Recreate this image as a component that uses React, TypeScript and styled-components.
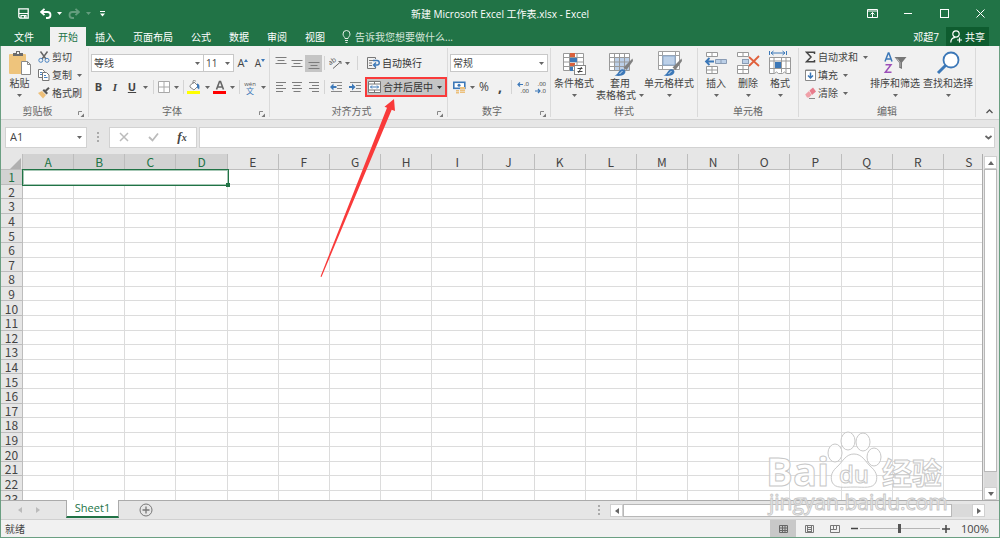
import React from 'react';
import styled, { createGlobalStyle } from 'styled-components';

const GREEN = '#217346';
const UI = '"Open Sans", "Noto Sans CJK SC", sans-serif';
const CELL = '"Noto Sans CJK SC", "Noto Sans", sans-serif';

const Global = createGlobalStyle`
  * { box-sizing: border-box; }
  body { margin: 0; font-family: ${UI}; font-size: 10px; color: #444; overflow: hidden; }
  button, input, select { font: inherit; color: inherit; margin: 0; padding: 0; border: 0; background: none; border-radius: 0; outline: 0; }
  svg { display: block; flex: none; }
`;

const Window = styled.div`
  position: relative;
  display: flex;
  flex-direction: column;
  height: 100vh;
  min-height: 320px;
  background: #e6e6e6;
  border: solid #6b9f82;
  border-width: 0 1px 1px;
  line-height: 14px;
  white-space: nowrap;
`;

/* ---------- title bar and tabs ---------- */
const TitleBar = styled.header`
  display: grid;
  grid-template-columns: 1fr auto 1fr;
  align-items: center;
  height: 27px;
  margin: 0 -1px;
  background: ${GREEN};
  color: #fff;
`;
const Title = styled.h1`
  margin: 0;
  font-size: 10px;
  font-weight: 400;
`;
const QuickBar = styled.div`
  display: flex;
  align-items: center;
  padding-left: 11px;
`;
const WindowBar = styled.div`
  display: flex;
  justify-content: flex-end;
  align-items: center;
  padding-right: 2px;
`;
const BarButton = styled.button<{ $w: number; $dim?: boolean }>`
  display: flex;
  align-items: center;
  justify-content: center;
  width: ${p => p.$w}px;
  height: 20px;
  color: #fff;
  opacity: ${p => (p.$dim ? 0.3 : 1)};
`;
const TabBar = styled.nav`
  display: flex;
  height: 19px;
  margin: 0 -1px;
  background: ${GREEN};
  color: #fff;
`;
const Tab = styled.button<{ $active?: boolean; $file?: boolean }>`
  padding: ${p => (p.$file ? '0 16px 0 14px' : p.$active ? '0 8px' : '0 9px')};
  color: ${p => (p.$active ? GREEN : '#fff')};
  background: ${p => (p.$active ? '#f1f1f1' : 'transparent')};
`;
const TellMe = styled.label`
  display: flex;
  flex: 1;
  align-items: center;
  gap: 4px;
  padding-left: 8px;
  color: #d5e6db;
  input { flex: 1; min-width: 0; }
  input::placeholder { color: #d5e6db; opacity: 1; }
`;
const Account = styled.button`
  padding: 0 7px;
  color: #fff;
`;
const Share = styled.button`
  display: flex;
  align-items: center;
  gap: 2px;
  width: 43px;
  margin-right: 11px;
  padding-left: 4px;
  background: #0e5c2f;
  color: #fff;
`;

/* ---------- ribbon ---------- */
const Ribbon = styled.section`
  display: flex;
  height: 74px;
  padding-top: 2px;
  background: #f1f1f1;
  border-bottom: 1px solid #d2d2d2;
`;
const GroupBox = styled.div<{ $w: number }>`
  display: flex;
  flex-direction: column;
  width: ${p => p.$w}px;
  flex: none;
  margin-bottom: 2px;
  border-right: 1px solid #dadada;
`;
const GroupBody = styled.div`
  display: flex;
  flex: none;
  height: 56px;
`;
const GroupFoot = styled.div`
  display: flex;
  flex: none;
  align-items: center;
  height: 14px;
  color: #666;
  span { flex: 1; text-align: center; }
`;
const Launcher = styled.button`
  width: 14px;
  height: 14px;
  padding: 5px 0 0 4px;
`;
const Rows = styled.div`
  display: flex;
  flex-direction: column;
  flex: 1;
  gap: 2px;
  padding: 4px 0 0 2px;
`;
const Row = styled.div`
  display: flex;
  align-items: center;
  height: 22px;
`;
const Stack = styled.div<{ $pad?: number }>`
  display: flex;
  flex: 1;
  flex-direction: column;
  padding-left: ${p => p.$pad || 0}px;
`;
const SmallButton = styled.button`
  display: flex;
  align-items: center;
  gap: 2px;
  height: 18px;
  svg + span + svg { margin-left: 3px; }
`;
const BigButton = styled.button<{ $w: number }>`
  display: flex;
  flex-direction: column;
  align-items: center;
  flex: none;
  width: ${p => p.$w}px;
  padding-top: 2px;
  line-height: 12px;
  & > svg:first-child { height: 26px; margin-bottom: 1px; }
`;
const BigCaret = styled.span`
  display: flex;
  align-items: center;
  gap: 3px;
  height: 12px;
`;
const Tool = styled.button<{ $w: number; $on?: boolean }>`
  display: flex;
  align-items: center;
  justify-content: center;
  flex: none;
  width: ${p => p.$w}px;
  height: 17px;
  background: ${p => (p.$on ? '#c5c5c5' : 'transparent')};
`;
const Glyph = styled.span<{ $bold?: boolean; $italic?: boolean; $line?: boolean; $serif?: boolean; $size?: number }>`
  font-family: ${p => (p.$serif ? '"Liberation Serif", serif' : UI)};
  font-size: ${p => p.$size || 11}px;
  font-weight: ${p => (p.$bold ? 700 : 400)};
  font-style: ${p => (p.$italic ? 'italic' : 'normal')};
  text-decoration: ${p => (p.$line ? 'underline' : 'none')};
`;
const Split = styled.i<{ $m?: number }>`
  width: 1px;
  height: 14px;
  margin: 0 ${p => p.$m ?? 2}px;
  background: #d4d4d4;
`;
const Combo = styled.label<{ $w: number }>`
  position: relative;
  flex: none;
  width: ${p => p.$w}px;
  height: 18px;
  margin-right: -1px;
  background: #fff;
  border: 1px solid #c8c8c8;
  select { appearance: none; width: 100%; height: 16px; padding-left: 2px; }
  svg { position: absolute; right: 3px; top: 7px; pointer-events: none; }
`;
const TextButton = styled.button<{ $marked?: boolean }>`
  display: flex;
  align-items: center;
  gap: 2px;
  flex: none;
  height: 20px;
  width: 82px;
  padding: 0 ${p => (p.$marked ? 3 : 1)}px 0 1px;
  border: 2px solid ${p => (p.$marked ? '#f93a3a' : 'transparent')};
  background: ${p => (p.$marked ? '#c5c5c5' : 'transparent')};
  color: #333;
  span { flex: 1; text-align: left; }
`;
const Collapse = styled.button`
  display: flex;
  flex: 1;
  align-items: flex-end;
  justify-content: center;
  padding: 0 0 5px 4px;
`;

/* ---------- formula bar ---------- */
const FormulaBar = styled.div`
  display: flex;
  align-items: center;
  height: 34px;
  padding: 0 4px;
`;
const NameBox = styled.label`
  display: flex;
  align-items: center;
  width: 82px;
  height: 21px;
  padding: 0 4px;
  background: #fff;
  border: 1px solid #d2d2d2;
  input { flex: 1; min-width: 0; font-size: 11px; }
`;
const Grip = styled.div`
  display: flex;
  align-items: center;
  justify-content: center;
  width: 22px;
`;
const EntryButtons = styled.div`
  display: flex;
  align-items: center;
  justify-content: space-around;
  width: 88px;
  height: 21px;
  margin-right: 2px;
  background: #fff;
  border: 1px solid #d2d2d2;
`;
const FormulaInput = styled.label`
  display: flex;
  align-items: center;
  flex: 1;
  height: 21px;
  padding: 0 2px;
  background: #fff;
  border: 1px solid #d2d2d2;
  input { flex: 1; }
`;

/* ---------- sheet ---------- */
const SheetArea = styled.main`
  display: flex;
  flex: 1;
  min-height: 0;
`;
const GridPane = styled.div`
  flex: 1;
  min-width: 0;
  overflow: hidden;
  border-right: 1px solid #ababab;
`;
const Grid = styled.table`
  table-layout: fixed;
  width: calc(100% + 13px);
  height: calc(100% + 6px);
  border-spacing: 0;
  font-family: ${CELL};
  font-size: 12px;
  line-height: 13px;
  td, th { padding: 0; font-weight: 400; text-align: center; }
  td { background: #fff; border: solid #dcdcdc; border-width: 0 1px 1px 0; }
  thead tr { height: 16px; }
`;
const HeadCell = styled.th<{ $on?: boolean }>`
  background: ${p => (p.$on ? '#d2d2d2' : '#e6e6e6')};
  color: ${p => (p.$on ? GREEN : '#444')};
  border: solid #bdbdbd;
  border-width: 0 1px 1px 0;
`;
const Corner = styled.th`
  width: 22px;
  border: solid #bdbdbd;
  border-width: 0 1px 1px 0;
  svg { margin: 3px 0 0 9px; }
`;
const Picked = styled.td`
  position: relative;
  && { border: 0; box-shadow: 0 0 0 1px ${GREEN}, inset 0 0 0 1px ${GREEN}66; }
  &::after {
    content: '';
    position: absolute;
    right: -2px;
    bottom: -2px;
    width: 4px;
    height: 4px;
    background: ${GREEN};
  }
`;
const VScroll = styled.div`
  display: flex;
  flex-direction: column;
  width: 13px;
  margin: 2px 2px 0 1px;
  background: #dadada;
`;
const ScrollButton = styled.button`
  display: flex;
  align-items: center;
  justify-content: center;
  width: 13px;
  height: 13px;
  flex: none;
  background: #fff;
  border: 1px solid #d0d0d0;
`;
const Thumb = styled.div<{ $grow: number }>`
  flex: ${p => p.$grow} 1 0;
  background: #fff;
  border: 1px solid #b8b8b8;
`;
const Space = styled.div<{ $grow: number }>`
  flex: ${p => p.$grow} 1 0;
`;

/* ---------- bottom bars ---------- */
const SheetBar = styled.div`
  display: flex;
  height: 19px;
  border-top: 1px solid #ababab;
`;
const SheetNav = styled.div`
  display: flex;
  align-items: center;
  width: 65px;
  padding-left: 10px;
  button { display: flex; justify-content: center; width: 18px; }
`;
const SheetTab = styled.button`
  width: 53px;
  height: 18px;
  margin-top: -1px;
  background: #fff;
  border: solid #ababab;
  border-width: 0 1px;
  border-bottom: 2px solid ${GREEN};
  color: ${GREEN};
  font-size: 11px;
  line-height: 14px;
`;
const AddSheet = styled.button`
  display: flex;
  align-items: center;
  width: 40px;
  padding-left: 20px;
`;
const HScroll = styled.div`
  display: flex;
  width: 375px;
  height: 13px;
  margin: 3px 14px 0 0;
  background: #dadada;
`;
const Fill = styled.div`
  flex: 1;
`;
const StatusBar = styled.footer`
  display: flex;
  align-items: center;
  height: 18px;
  padding-left: 4px;
  background: #f1f1f1;
  border-top: 1px solid #d0d0d0;
`;
const ViewButton = styled.button<{ $on?: boolean }>`
  display: flex;
  align-items: center;
  justify-content: center;
  width: 26px;
  height: 17px;
  background: ${p => (p.$on ? '#c8c8c8' : 'transparent')};
`;
const ZoomButton = styled.button`
  display: flex;
  justify-content: center;
  width: 12px;
`;
const ZoomRange = styled.input`
  appearance: none;
  width: 80px;
  height: 10px;
  background: linear-gradient(#b5b5b5, #b5b5b5) center / 100% 1px no-repeat;
  &::-webkit-slider-thumb { appearance: none; width: 3px; height: 9px; background: #555; }
`;
const ZoomValue = styled.span`
  width: 47px;
  padding-left: 9px;
  font-size: 11px;
`;

/* ---------- overlays ---------- */
const Pointer = styled.svg`
  position: absolute;
  left: 318px;
  top: 98px;
  pointer-events: none;
`;
const Watermark = styled.svg`
  position: absolute;
  right: 50px;
  bottom: 18px;
  pointer-events: none;
`;

/* ---------- icons ---------- */
const Caret = ({ c = '#666' }: { c?: string }) => (
  <svg width="5" height="3" viewBox="0 0 5 3"><path d="M0 0h5L2.5 3z" fill={c} /></svg>
);
const Arrow = ({ dir, c = '#666' }: { dir: 'left' | 'right' | 'up' | 'down'; c?: string }) => {
  const d = { left: 'M5 0v6L1 3z', right: 'M1 0v6l4-3z', up: 'M0 5h6L3 1z', down: 'M0 1h6L3 5z' }[dir];
  return <svg width="6" height="6" viewBox="0 0 6 6"><path d={d} fill={c} /></svg>;
};
const Dots = () => (
  <svg width="2" height="10" viewBox="0 0 2 10"><path d="M0 0h2v2H0zM0 4h2v2H0zM0 8h2v2H0z" fill="#aaa" /></svg>
);
const Lines = ({ widths, align, y = 1, step = 3 }: { widths: number[]; align: 'l' | 'c' | 'r'; y?: number; step?: number }) => (
  <svg width="12" height="12" viewBox="0 0 12 12">
    {widths.map((w, i) => (
      <rect key={i} x={align === 'l' ? 1 : align === 'r' ? 11 - w : 6 - w / 2} y={y + i * step} width={w} height="1" fill="#7c7c7c" />
    ))}
  </svg>
);
const Indent = ({ out }: { out?: boolean }) => (
  <svg width="12" height="12" viewBox="0 0 12 12">
    <path d="M1 1.5h11M7 4.5h5M7 7.5h5M1 10.5h11" stroke="#888" />
    <path d={out ? 'M0 6l3.500-3.500v2.500h3v2h-3v2.500z' : 'M6.500 6L3 2.500V5H0v2h3v2.500z'} fill="#3c78b8" />
  </svg>
);
const PasteIcon = () => (
  <svg width="24" height="26" viewBox="0 0 24 26">
    <rect x="1" y="4" width="17" height="20" rx="1" fill="#eec47c" />
    <path d="M5 6V3h3V1h4v2h3v3z" fill="#6a6a6a" /><rect x="9" y="2" width="2" height="2" fill="#f1f1f1" />
    <path d="M13.5 11.5h6l3 3v10h-9z" fill="#fff" stroke="#8a8a8a" /><path d="M19.5 11.5v3h3" fill="none" stroke="#8a8a8a" />
  </svg>
);
const CutIcon = () => (
  <svg width="12" height="12" viewBox="0 0 12 12" fill="none">
    <path d="M2.5 .5L8 8M9.5 .5L4 8" stroke="#666" strokeWidth="1.5" />
    <circle cx="2.8" cy="9.3" r="2" stroke="#4a83c0" /><circle cx="9" cy="9.3" r="2" stroke="#4a83c0" />
  </svg>
);
const CopyIcon = () => (
  <svg width="12" height="12" viewBox="0 0 12 12" stroke="#777" fill="#fff">
    <path d="M.5.5h4l2 2v6h-6z" /><path d="M4.5 3.5h4l2.5 2.5v5.5H4.5z" />
    <path d="M2 3.5h2M2 5.500h2M6 6.5h2M6 8.5h3.5" stroke="#4a83c0" />
  </svg>
);
const BrushIcon = () => (
  <svg width="12" height="12" viewBox="0 0 12 12">
    <path d="M0 6l4-2 4 4-3 3.5z" fill="#eec07a" /><path d="M4.5 3.5L6 2l4 4-1.5 1.5z" fill="#555" />
    <path d="M7.5 4L11 .8" stroke="#555" strokeWidth="2" />
  </svg>
);
const BordersIcon = () => (
  <svg width="12" height="12" viewBox="0 0 12 12" fill="#fff" stroke="#a8a8a8"><path d="M.5.5h11v11H.5zM6 .5v11M.5 6h11" /></svg>
);
const FillIcon = () => (
  <svg width="14" height="14" viewBox="0 0 14 14">
    <path d="M3 5.5L7 2l4 4-4 4-4-3z" fill="#fff" stroke="#888" /><path d="M6 4V1.5a1.2 1.2 0 0 1 2.5 0" fill="none" stroke="#888" />
    <path d="M10 3.500c2.500.5 3 3 2 6l-2-2z" fill="#3c78b8" /><rect x="0" y="11" width="13" height="3" fill="#ff0" />
  </svg>
);
const FontColorIcon = () => (
  <svg width="14" height="14" viewBox="0 0 14 14">
    <path d="M3.5 9.5L6.5 1.5h1L10.500 9.5M4.800 7h4.500" fill="none" stroke="#666" strokeWidth="1.6" />
    <rect x="0" y="11" width="13" height="3" fill="#f00" />
  </svg>
);
const PhoneticIcon = () => (
  <svg width="14" height="15" viewBox="0 0 14 15">
    <text x="7" y="6" fontSize="6" textAnchor="middle" fill="#555">wén</text>
    <text x="7" y="14" fontSize="8" textAnchor="middle" fill="#3c78b8">文</text>
  </svg>
);
const OrientIcon = () => (
  <svg width="13" height="12" viewBox="0 0 13 12" fill="none" stroke="#666">
    <text x="0" y="7" fontSize="7" fill="#555" stroke="none" transform="rotate(-35 3 6)">ab</text>
    <path d="M4 11.5L12 4.5M12 4.5H9.5M12 4.5V7" />
  </svg>
);
const WrapIcon = () => (
  <svg width="13" height="12" viewBox="0 0 13 12" fill="none">
    <path d="M8.500 2V.5h-8v11h8V10M2 3.5h5M2 6h3M2 8.5h3" stroke="#777" />
    <path d="M6 3.500h4a2.200 2.200 0 0 1 0 4.500H7M9 5.500L6.500 8 9 10.500" stroke="#3c78b8" strokeWidth="1.400" />
  </svg>
);
const MergeIcon = () => (
  <svg width="13" height="12" viewBox="0 0 13 12" fill="#fff" stroke="#777">
    <path d="M.5.5h12v11H.5zM.5 3h12M.5 9h12M6.5.5V3M6.5 9v2.5" />
    <path d="M2.5 6h8M4 4.5L2.5 6 4 7.5M9 4.5L10.5 6 9 7.5" fill="none" stroke="#3c78b8" />
  </svg>
);
const CurrencyIcon = () => (
  <svg width="13" height="13" viewBox="0 0 13 13">
    <rect x=".8" y="1.3" width="11" height="6" fill="#fff" stroke="#3c78b8" strokeWidth="1.6" /><circle cx="6" cy="4.3" r="1.5" fill="#3c78b8" />
    <path d="M7 6h5v2H7zM7 8.5h5v1.5H7zM7 10.500h5V12H7zM3 9h3v1.5H3zM3 11h3v1.5H3z" fill="#ecc07c" />
  </svg>
);
const DecimalIcon = ({ less }: { less?: boolean }) => (
  <svg width="13" height="13" viewBox="0 0 13 13">
    <text x={less ? 12 : 7} y="5" textAnchor={less ? 'end' : 'start'} fontSize="6" fill="#333">{less ? '.00' : '.0'}</text>
    <text x="12" y="12" textAnchor="end" fontSize="6" fill="#333">{less ? '.0' : '.00'}</text>
    <path d={less ? 'M1 10h4.5M4 8l2 2-2 2' : 'M6 3.5H1.5M3 1.5l-2 2 2 2'} fill="none" stroke="#3c78b8" strokeWidth="1.2" />
  </svg>
);
const Pen = () => (
  <g transform="translate(0 2)">
    <path d="M24.500 5.500l.5 2.500-6.500 9-3-2.500z" fill="#808080" />
    <path d="M6.500 22.500c4-.5 3.500-5.500 7.500-6.200 3.500-.3 4.500 3 2.200 5-2 1.700-6 2-9.700 1.200z" fill="#3c78b8" /><path d="M11.500 21l3-3" stroke="#dce8f4" />
  </g>
);
const CondIcon = () => (
  <svg width="25" height="26" viewBox="0 0 25 26">
    <path d="M1.5 3.5h20v17h-20zM1.5 7.5h20M1.5 12h20M1.5 16.5h20M7.5 3.5v17M15 3.5v17" fill="#fff" stroke="#999" />
    <path d="M8 3h5v4H8z" fill="#d9603c" /><path d="M8 8h7v4H8z" fill="#3c78b8" /><path d="M8 13h5v3H8z" fill="#d9603c" /><path d="M8 17h3v4H8z" fill="#3c78b8" />
    <rect x="12.5" y="15.5" width="11" height="9" fill="#fff" stroke="#888" /><path d="M15.500 18.5h5M15.500 21.5h5M19.500 17l-3 6" stroke="#444" />
  </svg>
);
const TableStyleIcon = () => (
  <svg width="25" height="26" viewBox="0 0 25 26">
    <g transform="translate(0 1)">
      <path d="M1.5 2.5h20v17h-20z" fill="#fff" /><path d="M7 7h14v12H7z" fill="#bcd0e8" />
      <path d="M1.5 2.5h20v17h-20zM1.5 6.5h20M1.5 11h20M1.5 15.5h20M6.5 2.5v17M11.5 2.5v17M16.5 2.5v17" fill="none" stroke="#999" />
      <Pen />
    </g>
  </svg>
);
const CellStyleIcon = () => (
  <svg width="25" height="26" viewBox="0 0 25 26">
    <g transform="translate(0 1)">
      <path d="M1.5.5h21v18h-21zM1.5 4.500h21M1.5 14.5h21M5.5 .5v18M18.500 .5v18" fill="#fff" stroke="#a0a0a0" />
      <rect x="6" y="5" width="12" height="9" fill="#bcd0e8" stroke="#8aaad0" />
      <Pen />
    </g>
  </svg>
);
const InsertIcon = () => (
  <svg width="24" height="24" viewBox="0 0 24 24">
    <path d="M2.5 1.5h11v4h-11zM8 1.5v4M2.5 15.5h11v7h-11zM8 15.5v7M2.5 19h11" fill="#fff" stroke="#999" />
    <path d="M11.5 8.5h11v4h-11zM17 8.5v4" fill="#bcd0e8" stroke="#8a9cb4" />
    <path d="M10 10.5H2M5.5 7L2 10.5 5.5 14" fill="none" stroke="#3c78b8" strokeWidth="1.8" />
  </svg>
);
const DeleteIcon = () => (
  <svg width="24" height="24" viewBox="0 0 24 24">
    <path d="M1.5 1.5h11v4h-11zM7 1.5v4M1.5 14.5h11v8h-11zM7 14.5v8M1.5 18.5h11" fill="#fff" stroke="#999" />
    <rect x="6.5" y="8.5" width="6" height="4" fill="#bcd0e8" stroke="#8a9cb4" />
    <path d="M13 6l10 9M23 5L13 15" stroke="#e0603c" strokeWidth="1.8" />
  </svg>
);
const FormatIcon = () => (
  <svg width="24" height="24" viewBox="0 0 24 24">
    <path d="M1.5 0v4M18.5 0v4M3 2h14M5.5 0L3 2l2.5 2M14.5 0L17 2l-2.5 2" fill="none" stroke="#3c78b8" />
    <path d="M1.5 6.5h21v16h-4l-2-1.5-2 1.5h-4l-2-1.5-2 1.5h-5zM6 6.500v16M13.5 6.5v15M18 6.5v16M1.5 10h21M1.5 17.5h21" fill="#fff" stroke="#999" />
    <rect x="7" y="11" width="6" height="6" fill="#3c78b8" />
  </svg>
);
const SumIcon = () => (
  <svg width="11" height="12" viewBox="0 0 11 12"><path d="M9.5 3V1.2H1.5L6 6l-4.500 4.8h8V9" fill="none" stroke="#444" strokeWidth="1.5" /></svg>
);
const FillDownIcon = () => (
  <svg width="11" height="12" viewBox="0 0 11 12" fill="none"><path d="M.5 1h10v10.5H.5z" fill="#fff" stroke="#888" /><path d="M.5 1.5h10" stroke="#888" /><path d="M5.5 3.5V9M3 6.5L5.5 9 8 6.5" stroke="#3c78b8" strokeWidth="1.5" /></svg>
);
const EraseIcon = () => (
  <svg width="11" height="12" viewBox="0 0 11 12"><path d="M4.500 3.500L8 .5l3 4-4 3.500z" fill="#e87c8c" /><path d="M4 4L6.500 8 4 10.500H2L.2 7.500z" fill="#f0a0a8" /><path d="M4 11.500h6" stroke="#888" /></svg>
);
const SortIcon = () => (
  <svg width="24" height="24" viewBox="0 0 24 24" fill="none">
    <path d="M2 10.5L5.3 2h.6L9 10.5M3 8h5" stroke="#3c78b8" strokeWidth="1.5" />
    <path d="M2.5 13.7h5.500L2.3 21.3h6.2" stroke="#9c50b8" strokeWidth="1.5" />
    <path d="M11.5 6h12l-4.500 5.5V18l-3-1.5v-5z" fill="#777" /><path d="M14 7.5l3 4V16" stroke="#ccc" strokeWidth=".8" />
  </svg>
);
const FindIcon = () => (
  <svg width="24" height="24" viewBox="0 0 24 24"><path d="M10 14l-8 8" stroke="#3c78b8" strokeWidth="3" /><circle cx="15" cy="9" r="7.5" fill="#fff" stroke="#3c78b8" strokeWidth="1.8" /></svg>
);
const SaveIcon = () => (
  <svg width="11" height="11" viewBox="0 0 11 11" fill="none" stroke="#fff"><path d="M.8.8h9.400v9.400H2L.8 9z" strokeWidth="1.300" /><path d="M1 5.5h9M3 10V7.500h5V10M6.500 8v2" strokeWidth="1.200" /></svg>
);
const UndoIcon = ({ flip }: { flip?: boolean }) => (
  <svg width="12" height="11" viewBox="0 0 12 11"><path d={flip ? 'M11 4H4.500a3 3 0 0 0 0 6H6M7.500.8L11 4 7.500 7.200' : 'M1 4h6.500a3 3 0 0 1 0 6H6M4.500.8L1 4l3.500 3.200'} fill="none" stroke="#fff" strokeWidth="1.8" /></svg>
);

/* ---------- parts ---------- */
const Group = ({ w, name, launcher, children }: { w: number; name: string; launcher?: boolean; children: React.ReactNode }) => (
  <GroupBox $w={w}>
    <GroupBody>{children}</GroupBody>
    <GroupFoot>
      <span>{name}</span>
      {launcher && (
        <Launcher aria-label={name}>
          <svg width="6" height="6" viewBox="0 0 6 6"><path d="M.5 4V.5H4" fill="none" stroke="#888" /><path d="M6 2.5V6H2.5z" fill="#777" /></svg>
        </Launcher>
      )}
    </GroupFoot>
  </GroupBox>
);
const Big = ({ w, icon, label, second }: { w: number; icon: React.ReactNode; label: string; second?: string }) => (
  <BigButton $w={w}>
    {icon}
    <span>{label}</span>
    <BigCaret>{second}<Caret /></BigCaret>
  </BigButton>
);
const More = ({ w = 10 }: { w?: number }) => <Tool $w={w} aria-label="更多"><Caret /></Tool>;
const Select = ({ w, label, value }: { w: number; label: string; value: string }) => (
  <Combo $w={w}>
    <select aria-label={label}><option>{value}</option></select>
    <Caret />
  </Combo>
);

const columns = 'ABCDEFGHIJKLMNOPQRS'.split('');
const rowNumbers = Array.from({ length: 23 }, (_, i) => i + 1);

export default function App() {
  return (
    <Window>
      <Global />
      <TitleBar>
        <QuickBar>
          <BarButton $w={24} aria-label="保存"><SaveIcon /></BarButton>
          <BarButton $w={22} aria-label="撤消"><UndoIcon /></BarButton>
          <BarButton $w={5} aria-label="撤消列表"><Caret c="#fff" /></BarButton>
          <BarButton $w={24} $dim aria-label="恢复"><UndoIcon flip /></BarButton>
          <BarButton $w={5} $dim aria-label="恢复列表"><Caret c="#fff" /></BarButton>
          <BarButton $w={22} aria-label="自定义">
            <svg width="5" height="6" viewBox="0 0 5 6"><path d="M0 0h5v1H0zM0 2.5h5L2.5 5.5z" fill="#fff" /></svg>
          </BarButton>
        </QuickBar>
        <Title>新建 Microsoft Excel 工作表.xlsx - Excel</Title>
        <WindowBar>
          <BarButton $w={36} aria-label="功能区显示选项">
            <svg width="11" height="9" viewBox="0 0 11 9" fill="none" stroke="#fff"><path d="M.5.5h10v8H.5zM.5 2h10M5.5 8V3.5M3.5 5.5l2-2 2 2" /></svg>
          </BarButton>
          <BarButton $w={36} aria-label="最小化"><svg width="8" height="1"><rect width="8" height="1" fill="#fff" /></svg></BarButton>
          <BarButton $w={36} aria-label="最大化"><svg width="9" height="9"><rect x=".5" y=".5" width="8" height="8" fill="none" stroke="#fff" /></svg></BarButton>
          <BarButton $w={36} aria-label="关闭"><svg width="9" height="9"><path d="M.5.5l8 8M8.5.5l-8 8" stroke="#fff" /></svg></BarButton>
        </WindowBar>
      </TitleBar>
      <TabBar>
        <Tab $file>文件</Tab>
        <Tab $active>开始</Tab>
        {['插入', '页面布局', '公式', '数据', '审阅', '视图'].map(t => <Tab key={t}>{t}</Tab>)}
        <TellMe>
          <svg width="9" height="13" viewBox="0 0 9 13" fill="none" stroke="#e4efe8"><path d="M3 8.5C3 7 1 6.500 1 4a3.5 3.5 0 0 1 7 0c0 2.5-2 3-2 4.500zM3 10.5h3M3.5 12.5h2" /></svg>
          <input aria-label="告诉我" placeholder="告诉我您想要做什么..." />
        </TellMe>
        <Account>邓超7</Account>
        <Share>
          <svg width="13" height="13" viewBox="0 0 13 13" fill="none" stroke="#fff" strokeWidth="1.2"><circle cx="6" cy="4" r="3.2" /><path d="M.8 12.5c0-3 2-5 4.500-5.200M9.5 7.5v5M7 10h5" /></svg>
          共享
        </Share>
      </TabBar>

      <Ribbon>
        <Group w={88} name="剪贴板" launcher>
          <Big w={37} icon={<PasteIcon />} label="粘贴" />
          <Stack>
            <SmallButton><CutIcon /><span>剪切</span></SmallButton>
            <SmallButton><CopyIcon /><span>复制</span><Caret /></SmallButton>
            <SmallButton><BrushIcon /><span>格式刷</span></SmallButton>
          </Stack>
        </Group>
        <Group w={181} name="字体" launcher>
          <Rows>
            <Row>
              <Select w={113} label="字体" value="等线" />
              <Select w={31} label="字号" value="11" />
              <Tool $w={20} aria-label="增大字号"><Glyph>A</Glyph><svg width="4" height="9"><path d="M0 3l2-3 2 3z" fill="#3c78b8" /></svg></Tool>
              <Tool $w={14} aria-label="减小字号"><Glyph $size={10}>A</Glyph><svg width="4" height="9"><path d="M0 0h4L2 3z" fill="#3c78b8" /></svg></Tool>
            </Row>
            <Row>
              <Tool $w={15}><Glyph $bold>B</Glyph></Tool>
              <Tool $w={18}><Glyph $bold $italic $serif>I</Glyph></Tool>
              <Tool $w={16}><Glyph $bold $line>U</Glyph></Tool>
              <More /><Split $m={3} />
              <Tool $w={14} aria-label="边框"><BordersIcon /></Tool><More /><Split />
              <Tool $w={16} aria-label="填充颜色"><FillIcon /></Tool><More />
              <Tool $w={15} aria-label="字体颜色"><FontColorIcon /></Tool><More /><Split />
              <Tool $w={16} aria-label="拼音"><PhoneticIcon /></Tool><More />
            </Row>
          </Rows>
        </Group>
        <Group w={178} name="对齐方式" launcher>
          <Rows>
            <Row>
              <Tool $w={17} aria-label="顶端对齐"><Lines widths={[11, 7, 11]} align="c" y={0} /></Tool>
              <Tool $w={16} aria-label="垂直居中"><Lines widths={[11, 7, 11]} align="c" y={3} /></Tool>
              <Tool $w={17} $on aria-label="底端对齐"><Lines widths={[11, 7, 11]} align="c" y={5} /></Tool>
              <Split />
              <Tool $w={16} aria-label="方向"><OrientIcon /></Tool><More w={8} />
              <Split $m={6} />
              <TextButton><WrapIcon /><span>自动换行</span></TextButton>
            </Row>
            <Row>
              <Tool $w={17} aria-label="左对齐"><Lines widths={[10, 7, 10, 7]} align="l" /></Tool>
              <Tool $w={16} aria-label="居中"><Lines widths={[10, 7, 10, 7]} align="c" /></Tool>
              <Tool $w={17} aria-label="右对齐"><Lines widths={[10, 7, 10, 7]} align="r" /></Tool>
              <Split />
              <Tool $w={18} aria-label="减少缩进量"><Indent out /></Tool>
              <Tool $w={20} aria-label="增加缩进量"><Indent /></Tool>
              <TextButton $marked><MergeIcon /><span>合并后居中</span><Caret c="#333" /></TextButton>
            </Row>
          </Rows>
        </Group>
        <Group w={103} name="数字" launcher>
          <Rows>
            <Row><Select w={98} label="数字格式" value="常规" /></Row>
            <Row>
              <Tool $w={18} aria-label="会计格式"><CurrencyIcon /></Tool><More w={8} />
              <Tool $w={16}><Glyph $size={12}>%</Glyph></Tool>
              <Tool $w={16}><Glyph $bold $size={14}>,</Glyph></Tool>
              <Split $m={3} />
              <Tool $w={16} aria-label="增加小数位数"><DecimalIcon /></Tool>
              <Tool $w={18} aria-label="减少小数位数"><DecimalIcon less /></Tool>
            </Row>
          </Rows>
        </Group>
        <Group w={147} name="样式">
          <Big w={46} icon={<CondIcon />} label="条件格式" />
          <Big w={46} icon={<TableStyleIcon />} label="套用" second="表格格式" />
          <Big w={52} icon={<CellStyleIcon />} label="单元格样式" />
        </Group>
        <Group w={101} name="单元格">
          <Big w={36} icon={<InsertIcon />} label="插入" />
          <Big w={28} icon={<DeleteIcon />} label="删除" />
          <Big w={36} icon={<FormatIcon />} label="格式" />
        </Group>
        <Group w={177} name="编辑">
          <Stack $pad={6}>
            <SmallButton><SumIcon /><span>自动求和</span><Caret /></SmallButton>
            <SmallButton><FillDownIcon /><span>填充</span><Caret /></SmallButton>
            <SmallButton><EraseIcon /><span>清除</span><Caret /></SmallButton>
          </Stack>
          <Big w={52} icon={<SortIcon />} label="排序和筛选" />
          <Big w={54} icon={<FindIcon />} label="查找和选择" />
        </Group>
        <Collapse aria-label="折叠功能区"><svg width="7" height="5" viewBox="0 0 7 5"><path d="M.5 4l3-3 3 3" fill="none" stroke="#555" strokeWidth="1.3" /></svg></Collapse>
      </Ribbon>

      <FormulaBar>
        <NameBox><input aria-label="名称框" defaultValue="A1" /><Caret /></NameBox>
        <Grip><Dots /></Grip>
        <EntryButtons>
          <button aria-label="取消"><svg width="10" height="10"><path d="M1 1l8 8M9 1L1 9" stroke="#bbb" strokeWidth="1.5" /></svg></button>
          <button aria-label="输入"><svg width="11" height="10"><path d="M1 5l3.5 3.5L10 1.5" stroke="#bbb" strokeWidth="1.8" fill="none" /></svg></button>
          <button><Glyph $bold $italic $serif $size={13}>f</Glyph><Glyph $bold $italic $serif $size={10}>x</Glyph></button>
        </EntryButtons>
        <FormulaInput>
          <input aria-label="编辑栏" />
          <svg width="7" height="5" viewBox="0 0 7 5"><path d="M.5 1l3 2.5L6.5 1" fill="none" stroke="#666" strokeWidth="1.8" /></svg>
        </FormulaInput>
      </FormulaBar>

      <SheetArea>
        <GridPane>
          <Grid>
            <thead>
              <tr>
                <Corner><svg width="11" height="11"><path d="M11 0v11H0z" fill="#b0b0b0" /></svg></Corner>
                {columns.map((c, i) => <HeadCell key={c} $on={i < 4}>{c}</HeadCell>)}
              </tr>
            </thead>
            <tbody>
              {rowNumbers.map(n => (
                <tr key={n}>
                  <HeadCell $on={n === 1}>{n}</HeadCell>
                  {n === 1 && <Picked colSpan={4} />}
                  {columns.slice(n === 1 ? 4 : 0).map(c => <td key={c} />)}
                </tr>
              ))}
            </tbody>
          </Grid>
        </GridPane>
        <VScroll>
          <ScrollButton aria-label="向上"><Arrow dir="up" /></ScrollButton>
          <Thumb $grow={306} />
          <Space $grow={15} />
          <ScrollButton aria-label="向下"><Arrow dir="down" /></ScrollButton>
        </VScroll>
      </SheetArea>

      <SheetBar>
        <SheetNav>
          <button aria-label="上一张"><Arrow dir="left" c="#bbb" /></button>
          <button aria-label="下一张"><Arrow dir="right" c="#bbb" /></button>
        </SheetNav>
        <SheetTab>Sheet1</SheetTab>
        <AddSheet aria-label="新工作表">
          <svg width="14" height="14" viewBox="0 0 14 14" fill="none" stroke="#777"><circle cx="7" cy="7" r="6" /><path d="M3.5 7h7M7 3.5v7" strokeWidth="1.3" /></svg>
        </AddSheet>
        <Fill />
        <Grip><Dots /></Grip>
        <HScroll>
          <ScrollButton aria-label="向左"><Arrow dir="left" /></ScrollButton>
          <Thumb $grow={329} />
          <Space $grow={20} />
          <ScrollButton aria-label="向右"><Arrow dir="right" /></ScrollButton>
        </HScroll>
      </SheetBar>

      <StatusBar>
        <span>就绪</span>
        <Fill />
        <ViewButton $on aria-label="普通"><svg width="9" height="8" fill="none" stroke="#666"><path d="M.5.5h8v7h-8zM.5 3h8M.5 5.5h8M3.5.5v7M6 .5v7" /></svg></ViewButton>
        <ViewButton aria-label="页面布局"><svg width="9" height="8" fill="none" stroke="#777"><path d="M.5.5h8v7h-8zM2.5 1v6M6.5 1v6M3 2.5h3M3 4.5h3M3 6.5h3" /></svg></ViewButton>
        <ViewButton aria-label="分页预览"><svg width="10" height="8" fill="none" stroke="#777"><path d="M.5.5h9v7h-9zM3.5.5v4M6.5.5v4M.5 4.5h6" /></svg></ViewButton>
        <ZoomButton aria-label="缩小"><svg width="7" height="7"><path d="M0 3.5h7" stroke="#444" strokeWidth="1.5" /></svg></ZoomButton>
        <ZoomRange type="range" aria-label="缩放" min={0} max={200} defaultValue={98} />
        <ZoomButton aria-label="放大"><svg width="8" height="8"><path d="M0 4h8M4 0v8" stroke="#444" strokeWidth="1.5" /></svg></ZoomButton>
        <ZoomValue>100%</ZoomValue>
      </StatusBar>

      <Pointer width="78" height="182" viewBox="0 0 78 182">
        <path d="M75 1l1 12-3.300-1.200L2.500 179 1.500 178.500 68 9.800 65.500 8.800z" fill="#f93a3a" />
      </Pointer>
      <Watermark width="184" height="90" viewBox="0 0 184 90" fill="#ffffffc0" stroke="#c8c8c8" strokeWidth="1" fontFamily={UI}>
        <text x="1" y="57" fontSize="40" fontWeight="700">Bai</text>
        <ellipse cx="70" cy="24" rx="7" ry="9" />
        <ellipse cx="83" cy="12" rx="7" ry="9" />
        <ellipse cx="98" cy="13" rx="7" ry="9" />
        <ellipse cx="109" cy="28" rx="7" ry="9" />
        <path d="M89 25c8 0 11 7 16 12 6 5 8 10 6 16-3 7-12 5-22 5s-19 2-22-5c-2-6 0-11 6-16 5-5 8-12 16-12z" />
        <text x="89" y="54" fontSize="24" fontWeight="600" textAnchor="middle">du</text>
        <text x="117" y="55" fontSize="30" fontWeight="700">经验</text>
        <text x="4" y="81" fontSize="21">jingyan.baidu.com</text>
      </Watermark>
    </Window>
  );
}
